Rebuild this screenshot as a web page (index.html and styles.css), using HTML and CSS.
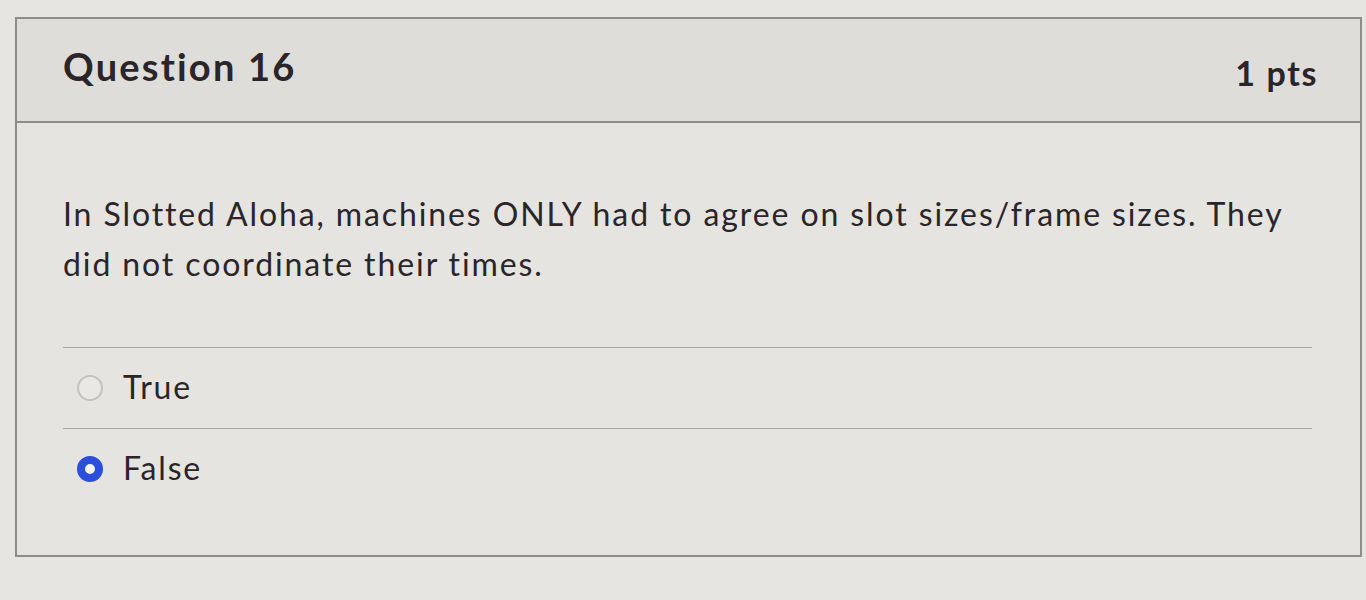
FILE: index.html
```html
<!DOCTYPE html>
<html lang="en">
<head>
    <meta charset="UTF-8">
    <meta name="viewport" content="width=device-width, initial-scale=1.0">
    <title>Quiz Question 16</title>
    <link rel="stylesheet" href="styles.css">
</head>
<body>
    <div class="question">
        <div class="question-header">
            <h2 class="question-title">Question 16</h2>
            <span class="question-points">1 pts</span>
        </div>
        <div class="question-body">
            <p class="question-text">In Slotted Aloha, machines ONLY had to agree on slot sizes/frame sizes. They did not coordinate their times.</p>
            <div class="answers">
                <label class="answer">
                    <span class="radio"></span>
                    <span class="answer-label">True</span>
                </label>
                <label class="answer">
                    <span class="radio checked"></span>
                    <span class="answer-label">False</span>
                </label>
            </div>
        </div>
    </div>
</body>
</html>
```

FILE: styles.css
```css
/* General Styles */
body {
    margin: 0;
    padding: 17px 4px 0 15px;
    background: #e6e5e1;
    font-family: Lato, 'Liberation Sans', sans-serif;
    color: #2b2428;
}

/* Question card */
.question {
    border: 2px solid #8f8c8c;
    background: #e5e4e0;
    height: 540px;
    box-sizing: border-box;
}

.question-header {
    display: flex;
    justify-content: space-between;
    align-items: center;
    height: 104px;
    padding: 0 42px 0 46px;
    background: #dedddA;
    border-bottom: 2px solid #8f8c8c;
    box-sizing: border-box;
}

.question-title {
    margin: 0 0 8px;
    font-size: 38px;
    font-weight: 700;
    letter-spacing: 2.2px;
}

.question-points {
    margin-top: 4px;
    font-size: 34px;
    font-weight: 700;
    letter-spacing: 1.6px;
}

/* Question body */
.question-body {
    padding: 66px 40px 0 46px;
}

.question-text {
    margin: 0;
    font-size: 32px;
    line-height: 50px;
    letter-spacing: 1.9px;
}

.answers {
    margin-top: 58px;
    margin-right: 8px;
}

.answer {
    display: flex;
    align-items: center;
    gap: 20px;
    height: 80px;
    padding-left: 14px;
    border-top: 1.5px solid #a9a7a5;
}

.answer-label {
    font-size: 32px;
    margin-top: -4px;
    letter-spacing: 1.8px;
}

.radio {
    width: 26px;
    height: 26px;
    border-radius: 50%;
    border: 2px solid #c4c2c0;
    background: #e9e8e5;
    box-sizing: border-box;
}

.radio.checked {
    border: 8px solid #2b4fdc;
    background: #f4f4f7;
}
```
